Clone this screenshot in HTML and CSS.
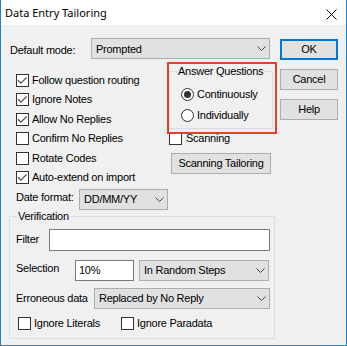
FILE: index.html
```html
<!DOCTYPE html>
<html>
<head>
<meta charset="utf-8">
<link rel="stylesheet" href="styles.css">
</head>
<body>
<div class="window">
  <div class="titlebar">
    <span class="title">Data Entry Tailoring</span>
    <svg class="close" width="11" height="11" viewBox="0 0 11 11"><path d="M0.5 0.5L10.5 10.5M10.5 0.5L0.5 10.5" stroke="#000" stroke-width="1" fill="none"/></svg>
  </div>
  <div class="content">
    <div class="main">
      <div class="row mode-row">
        <span class="label mode-label">Default mode:</span>
        <div class="combo mode-combo"><span>Prompted</span><svg class="chev" width="9" height="5" viewBox="0 0 9 5"><path d="M0.5 0.5L4.5 4.5L8.5 0.5" stroke="#444" fill="none"/></svg></div>
      </div>
      <div class="middle">
        <div class="checklist">
          <div class="check on"><span class="box"><svg width="11" height="11" viewBox="0 0 11 11"><path d="M1 5.3L3.9 8.2L9.6 2.5" stroke="#555" stroke-width="1.3" fill="none"/></svg></span>Follow question routing</div>
          <div class="check on"><span class="box"><svg width="11" height="11" viewBox="0 0 11 11"><path d="M1 5.3L3.9 8.2L9.6 2.5" stroke="#555" stroke-width="1.3" fill="none"/></svg></span>Ignore Notes</div>
          <div class="check on"><span class="box"><svg width="11" height="11" viewBox="0 0 11 11"><path d="M1 5.3L3.9 8.2L9.6 2.5" stroke="#555" stroke-width="1.3" fill="none"/></svg></span>Allow No Replies</div>
          <div class="check"><span class="box"></span>Confirm No Replies</div>
          <div class="check"><span class="box"></span>Rotate Codes</div>
          <div class="check on"><span class="box"><svg width="11" height="11" viewBox="0 0 11 11"><path d="M1 5.3L3.9 8.2L9.6 2.5" stroke="#555" stroke-width="1.3" fill="none"/></svg></span>Auto-extend on import</div>
        </div>
        <div class="rightcol">
          <div class="annotated">
            <fieldset class="group answer">
              <legend>Answer Questions</legend>
              <div class="radios">
                <div class="radio on"><span class="circle"></span>Continuously</div>
                <div class="radio"><span class="circle"></span>Individually</div>
              </div>
            </fieldset>
            <div class="annot"></div>
          </div>
          <div class="check scanning"><span class="box"></span>Scanning</div>
          <div class="btn scan-btn">Scanning Tailoring</div>
        </div>
      </div>
      <div class="row date-row">
        <span class="label date-label">Date format:</span>
        <div class="combo date-combo"><span>DD/MM/YY</span><svg class="chev" width="9" height="5" viewBox="0 0 9 5"><path d="M0.5 0.5L4.5 4.5L8.5 0.5" stroke="#444" fill="none"/></svg></div>
      </div>
      <fieldset class="group verification">
        <legend>Verification</legend>
        <div class="row filter-row">
          <span class="label filter-label">Filter</span>
          <div class="field filter-field"></div>
        </div>
        <div class="row sel-row">
          <span class="label sel-label">Selection</span>
          <div class="field sel-field">10%</div>
          <div class="combo sel-combo"><span>In Random Steps</span><svg class="chev" width="9" height="5" viewBox="0 0 9 5"><path d="M0.5 0.5L4.5 4.5L8.5 0.5" stroke="#444" fill="none"/></svg></div>
        </div>
        <div class="row err-row">
          <span class="label err-label">Erroneous data</span>
          <div class="combo err-combo"><span>Replaced by No Reply</span><svg class="chev" width="9" height="5" viewBox="0 0 9 5"><path d="M0.5 0.5L4.5 4.5L8.5 0.5" stroke="#444" fill="none"/></svg></div>
        </div>
        <div class="row ign-row">
          <div class="check lit"><span class="box"></span>Ignore Literals</div>
          <div class="check"><span class="box"></span>Ignore Paradata</div>
        </div>
      </fieldset>
    </div>
    <div class="buttons">
      <div class="btn ok">OK</div>
      <div class="btn">Cancel</div>
      <div class="btn">Help</div>
    </div>
  </div>
</div>
</body>
</html>
```
FILE: styles.css
```css
* { box-sizing: border-box; }
html, body { margin: 0; padding: 0; }
body {
  width: 347px;
  height: 346px;
  overflow: hidden;
  background: #fff;
  font-family: "Liberation Sans", Arial, sans-serif;
  font-size: 11px;
  line-height: 13px;
  letter-spacing: -0.25px;
  color: #000;
}
.window {
  width: 347px;
  height: 346px;
  border: 1px solid #1883d7;
  border-top: none;
  background: #f0f0f0;
  display: flex;
  flex-direction: column;
}
.titlebar {
  height: 25px;
  flex: none;
  background: #fff;
  display: flex;
  align-items: center;
  justify-content: space-between;
  padding: 0 9px 0 4px;
}
.title {
  font-family: "Noto Sans", sans-serif;
  font-size: 11px;
  letter-spacing: 0;
  line-height: 16px;
}
.close { margin-top: 3px; }
.content {
  display: flex;
  gap: 5px;
  padding: 13px 0 0 8px;
}
.main {
  width: 266px;
  display: flex;
  flex-direction: column;
}
.buttons {
  width: 58px;
  display: flex;
  flex-direction: column;
  gap: 9px;
  padding-top: 1px;
}
.btn {
  height: 21px;
  background: #e1e1e1;
  border: 1px solid #adadad;
  display: flex;
  align-items: center;
  justify-content: center;
  white-space: nowrap;
}
.btn.ok { border: 2px solid #0078d7; }
.row { display: flex; align-items: center; }
.label { white-space: nowrap; flex: none; }
.combo {
  height: 21px;
  background: #e1e1e1;
  border: 1px solid #adadad;
  display: flex;
  align-items: center;
  justify-content: space-between;
  padding: 1px 3px 0 4px;
  flex: none;
  white-space: nowrap;
}
.chev { flex: none; margin-top: -1px; }
.field {
  height: 22px;
  background: #fff;
  border: 1px solid #7a7a7a;
  padding: 1px 0 0 3px;
  display: flex;
  align-items: center;
  flex: none;
}
.mode-row { height: 21px; }
.mode-label { width: 81px; margin-left: 1px; padding-top: 4px; }
.mode-combo { width: 179px; }
.middle { display: flex; }
.checklist {
  width: 160px;
  padding: 15px 0 0 7px;
  display: flex;
  flex-direction: column;
  gap: 6.4px;
}
.check {
  display: flex;
  align-items: center;
  gap: 3px;
  height: 13px;
  white-space: nowrap;
}
.box {
  width: 13px;
  height: 13px;
  border: 1px solid #333;
  background: #fff;
  flex: none;
  display: block;
}
.box svg { display: block; }
.rightcol { display: flex; flex-direction: column; }
.annotated { position: relative; margin-top: 6px; }
.annot {
  position: absolute;
  left: -2px;
  top: -3px;
  right: -4px;
  bottom: -5px;
  border: 2px solid #e3402c;
}
fieldset.group {
  margin: 0;
  border: 1px solid #dcdcdc;
  min-width: 0;
}
fieldset.group legend { padding: 0 1px; line-height: 13px; }
.answer { width: 104px; padding: 10px 0 6px 11px; }
.answer legend { margin-left: -4px; }
.radios { display: flex; flex-direction: column; gap: 8px; }
.radio { display: flex; align-items: center; gap: 3px; height: 13px; white-space: nowrap; }
.circle {
  width: 13px;
  height: 13px;
  border: 1px solid #333;
  border-radius: 50%;
  background: #fff;
  display: flex;
  align-items: center;
  justify-content: center;
  flex: none;
}
.radio.on .circle::after {
  content: "";
  width: 7px;
  height: 7px;
  border-radius: 50%;
  background: #333;
}
.scanning { margin-top: 3px; gap: 4px; }
.scan-btn { width: 100px; margin: 8px 0 0 2px; }
.date-row { margin-top: 5px; height: 21px; }
.date-label { width: 63px; margin-left: 7px; margin-top: -3px; }
.date-combo { width: 89px; }
.verification { width: 266px; padding: 6px 4px 8px 6px; }
.verification legend { margin-left: 1px; }
.filter-row { height: 22px; }
.filter-label { width: 33px; }
.filter-field { width: 221px; }
.sel-row { margin-top: 9px; height: 21px; }
.sel-label { width: 59px; margin-top: -3px; }
.sel-field { width: 59px; height: 21px; }
.sel-combo { width: 130px; margin-left: 5px; }
.err-row { margin-top: 7px; height: 21px; }
.err-label { width: 78px; }
.err-combo { width: 176px; }
.ign-row { margin-top: 8px; padding-left: 2px; height: 13px; }
.lit { width: 103px; }
```
